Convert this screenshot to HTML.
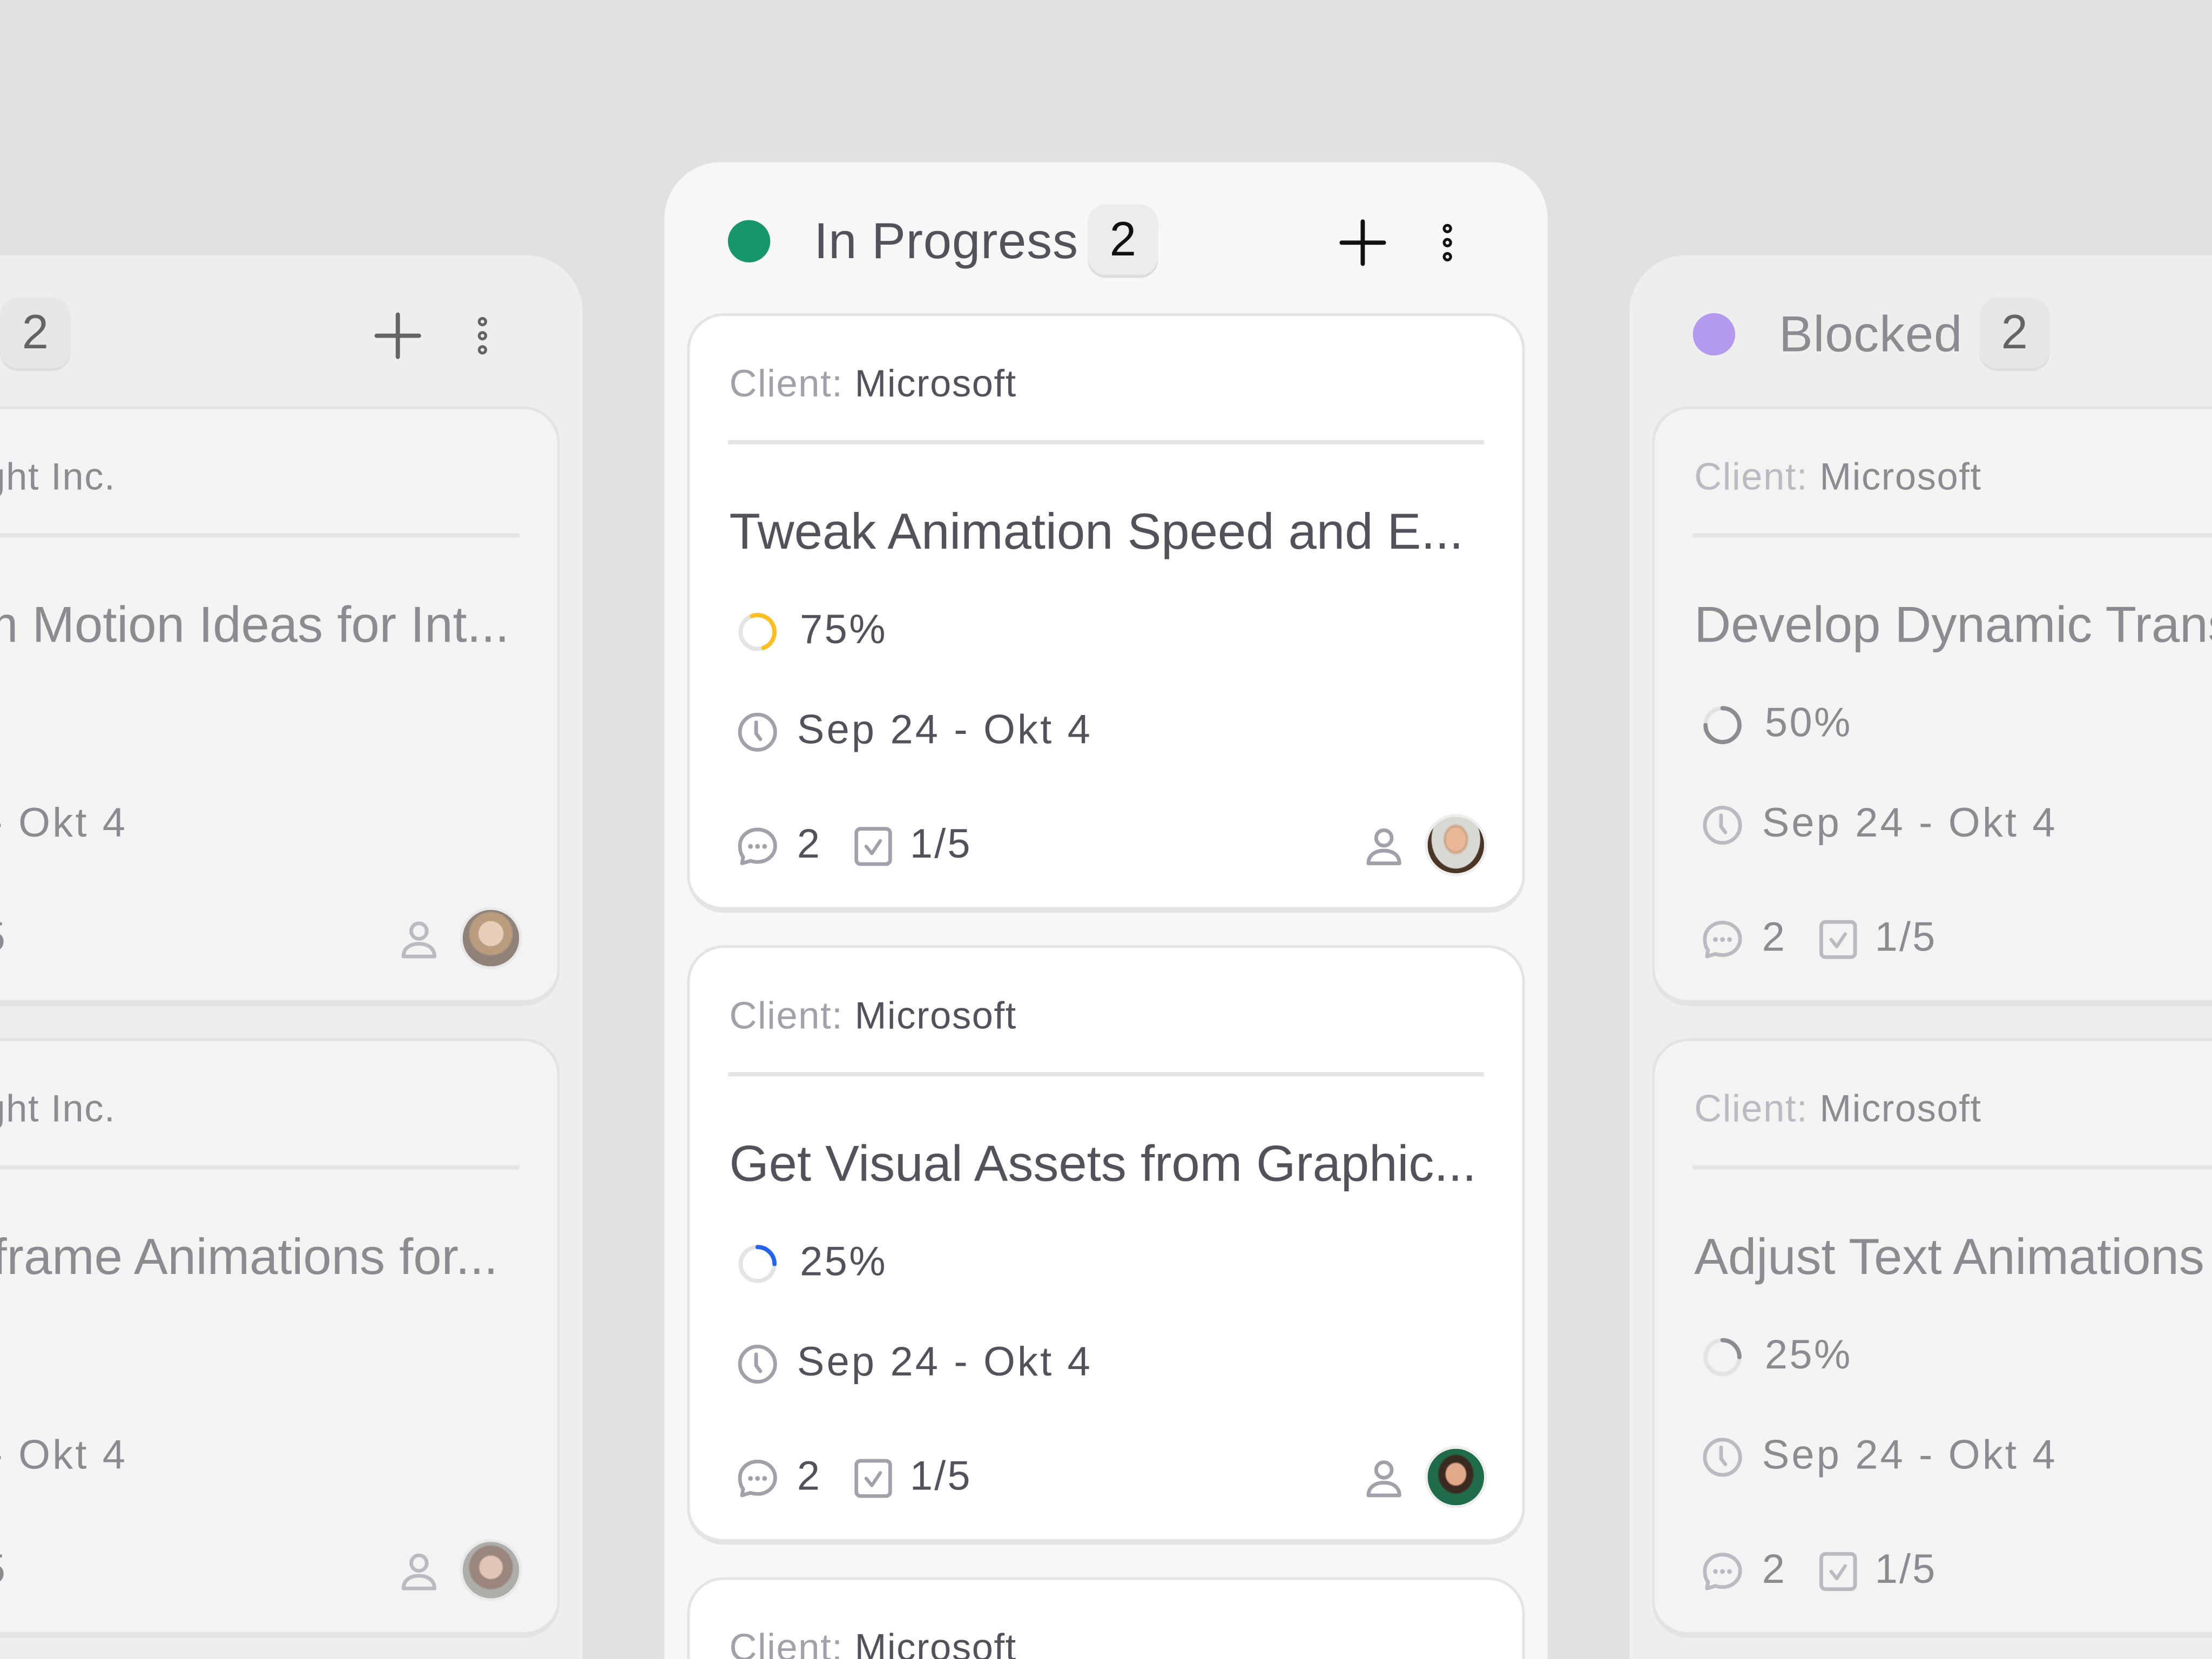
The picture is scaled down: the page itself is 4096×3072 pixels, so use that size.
<!DOCTYPE html>
<html><head><meta charset="utf-8"><style>
*{margin:0;padding:0;box-sizing:border-box}
html,body{width:4096px;height:3072px;overflow:hidden;background:#e1e1e1}
#s{position:absolute;left:0;top:0;width:1568px;height:1176px;transform:scale(2.6122449);transform-origin:0 0;font-family:"Liberation Sans",sans-serif;overflow:hidden}
.col{position:absolute;width:626px;background:#f7f7f7;border-radius:40px 40px 0 0;overflow:hidden}
.side{opacity:.6}
.dot{position:absolute;left:45px;width:30px;height:30px;border-radius:50%;top:41px}
.htitle{position:absolute;left:106px;top:34px;font-size:36px;line-height:44px;color:#52525b;white-space:nowrap;letter-spacing:.3px}
.badge{position:absolute;top:30px;width:50px;height:50px;border-radius:13px;background:#ececee;box-shadow:0 2px 0 #dcdcde;font-size:34px;line-height:50px;text-align:center;color:#111}
.plus{position:absolute;left:478px;top:40px}
.more{position:absolute;left:538px;top:40px}
.card{position:absolute;left:16px;width:594px;height:425px;background:#fff;border:2px solid #e4e4e7;border-bottom-width:4px;border-radius:26px;overflow:hidden}
.card>*{position:absolute;white-space:nowrap}
.cl{left:28px;top:32px;font-size:27px;line-height:32px;color:#a1a1aa;letter-spacing:.6px}
.cl b{font-weight:normal;color:#52525b}
.div{left:27px;top:88px;width:536px;height:3px;background:#e4e4e7}
.tt{left:28px;top:131px;font-size:36px;line-height:44px;color:#52525b}
.ttr{right:34px;top:131px;font-size:36px;line-height:44px;color:#52525b}
.pi{left:31px;top:207px}
.pt{left:78px;top:205px;font-size:29px;line-height:36px;color:#52525b;letter-spacing:1.3px}
.ci{left:31px;top:278px}
.dt{left:76px;top:276px;font-size:29px;line-height:36px;color:#52525b;letter-spacing:1.6px}
.mi{left:31px;top:359px}
.mt{left:76px;top:357px;font-size:29px;line-height:36px;color:#52525b}
.ki{left:113px;top:359px}
.kt{left:156px;top:357px;font-size:29px;line-height:36px;color:#52525b;letter-spacing:1.2px}
.ui{left:475px;top:359px}
.av{left:521px;top:353px;width:44px;height:44px;border-radius:50%;border:2px solid #eee;overflow:hidden}
</style></head><body><div id="s">

<svg width="0" height="0" style="position:absolute"><defs>
<symbol id="clock" viewBox="0 0 34 34"><circle cx="17" cy="17" r="12.5" fill="none" stroke="#a1a1aa" stroke-width="2.6"/><path d="M16 10v8l3 4" fill="none" stroke="#a1a1aa" stroke-width="2.6" stroke-linecap="round"/></symbol>
<symbol id="msg" viewBox="0 0 34 34"><path d="M17 5c7 0 12.5 5 12.5 11.5S24 28 17 28c-2 0-3.5-.3-5-.8L6 29l.8-4.6C5 22.5 4.5 19.5 4.5 16.5 4.5 10 10 5 17 5z" fill="none" stroke="#a1a1aa" stroke-width="2.6" stroke-linejoin="round"/><circle cx="12" cy="17" r="1.7" fill="#a1a1aa"/><circle cx="17" cy="17" r="1.7" fill="#a1a1aa"/><circle cx="22" cy="17" r="1.7" fill="#a1a1aa"/></symbol>
<symbol id="chk" viewBox="0 0 34 34"><rect x="5" y="4.5" width="24" height="25" rx="3" fill="none" stroke="#a1a1aa" stroke-width="2.6"/><path d="M12 17l4 5 6-9" fill="none" stroke="#a1a1aa" stroke-width="2.4" stroke-linecap="round" stroke-linejoin="round"/></symbol>
<symbol id="usr" viewBox="0 0 34 34"><circle cx="17" cy="11" r="5.5" fill="none" stroke="#a1a1aa" stroke-width="2.6"/><path d="M6 29c0-6 5-9 11-9s11 3 11 9z" fill="none" stroke="#a1a1aa" stroke-width="2.6" stroke-linejoin="round"/></symbol>
<symbol id="plus" viewBox="0 0 34 34"><path d="M17 2v30M2 17h30" stroke="#111" stroke-width="3" stroke-linecap="round"/></symbol>
<symbol id="more" viewBox="0 0 34 34"><circle cx="17" cy="7" r="2.3" fill="none" stroke="#111" stroke-width="2"/><circle cx="17" cy="17" r="2.3" fill="none" stroke="#111" stroke-width="2"/><circle cx="17" cy="27" r="2.3" fill="none" stroke="#111" stroke-width="2"/></symbol>
</defs></svg>

<!-- LEFT COLUMN -->
<div class="col side" style="left:-213px;top:181px;height:995px">
  <div class="dot" style="background:#3b82f6"></div>
  <div class="htitle">To Do</div>
  <div class="badge" style="left:213px">2</div>
  <svg class="plus" width="34" height="34"><use href="#plus"/></svg>
  <svg class="more" width="34" height="34"><use href="#more"/></svg>
  <div class="card" style="top:107px">
    <div class="cl" style="left:auto;right:313px">Client: <b>Brightlight Inc.</b></div>
    <div class="div"></div>
    <div class="ttr">Brainstorm Motion Ideas for Int...</div>
    <svg class="ci" width="34" height="34"><use href="#clock"/></svg><div class="dt">Sep 24 - Okt 4</div>
    <svg class="mi" width="34" height="34"><use href="#msg"/></svg><div class="mt">2</div>
    <svg class="ki" width="34" height="34"><use href="#chk"/></svg><div class="kt">1/5</div>
    <svg class="ui" width="34" height="34"><use href="#usr"/></svg>
    <div class="av" style="background:radial-gradient(circle at 50% 42%,#e9c1a0 0 28%,#a0703f 30% 48%,#5b4434 52%)"></div>
  </div>
  <div class="card" style="top:555px">
    <div class="cl" style="left:auto;right:313px">Client: <b>Brightlight Inc.</b></div>
    <div class="div"></div>
    <div class="ttr" style="right:42px">Create Keyframe Animations for...</div>
    <svg class="ci" width="34" height="34"><use href="#clock"/></svg><div class="dt">Sep 24 - Okt 4</div>
    <svg class="mi" width="34" height="34"><use href="#msg"/></svg><div class="mt">2</div>
    <svg class="ki" width="34" height="34"><use href="#chk"/></svg><div class="kt">1/5</div>
    <svg class="ui" width="34" height="34"><use href="#usr"/></svg>
    <div class="av" style="background:radial-gradient(circle at 50% 45%,#e2b49a 0 26%,#6b4a3a 30% 50%,#8a8a84 54%)"></div>
  </div>
</div>

<!-- CENTER COLUMN -->
<div class="col" style="left:471px;top:115px;height:1061px">
  <div class="dot" style="background:#17966a"></div>
  <div class="htitle">In Progress</div>
  <div class="badge" style="left:300px">2</div>
  <svg class="plus" width="34" height="34"><use href="#plus"/></svg>
  <svg class="more" width="34" height="34"><use href="#more"/></svg>
  <div class="card" style="top:107px">
    <div class="cl">Client: <b>Microsoft</b></div>
    <div class="div"></div>
    <div class="tt">Tweak Animation Speed and E...</div>
    <svg class="pi" width="34" height="34" viewBox="0 0 34 34"><circle cx="17" cy="17" r="12" fill="none" stroke="#e4e4e7" stroke-width="3"/><path d="M17 5A12 12 0 0 1 17 29" fill="none" stroke="#fbbf24" stroke-width="3" stroke-linecap="round" transform="rotate(-20 17 17)"/></svg>
    <div class="pt">75%</div>
    <svg class="ci" width="34" height="34"><use href="#clock"/></svg><div class="dt">Sep 24 - Okt 4</div>
    <svg class="mi" width="34" height="34"><use href="#msg"/></svg><div class="mt">2</div>
    <svg class="ki" width="34" height="34"><use href="#chk"/></svg><div class="kt">1/5</div>
    <svg class="ui" width="34" height="34"><use href="#usr"/></svg>
    <div class="av" style="background:radial-gradient(ellipse at 50% 40%,#e8b798 0 24%,#c9a07c 27%,#d8d8d4 33% 60%,#4a3526 62%)"></div>
  </div>
  <div class="card" style="top:555px">
    <div class="cl">Client: <b>Microsoft</b></div>
    <div class="div"></div>
    <div class="tt">Get Visual Assets from Graphic...</div>
    <svg class="pi" width="34" height="34" viewBox="0 0 34 34"><circle cx="17" cy="17" r="12" fill="none" stroke="#e4e4e7" stroke-width="3"/><path d="M17 5A12 12 0 0 1 29 17" fill="none" stroke="#2563eb" stroke-width="3" stroke-linecap="round"/></svg>
    <div class="pt">25%</div>
    <svg class="ci" width="34" height="34"><use href="#clock"/></svg><div class="dt">Sep 24 - Okt 4</div>
    <svg class="mi" width="34" height="34"><use href="#msg"/></svg><div class="mt">2</div>
    <svg class="ki" width="34" height="34"><use href="#chk"/></svg><div class="kt">1/5</div>
    <svg class="ui" width="34" height="34"><use href="#usr"/></svg>
    <div class="av" style="background:radial-gradient(ellipse at 50% 45%,#e2a88a 0 24%,#3b2a20 28% 42%,#1f6b4a 46%)"></div>
  </div>
  <div class="card" style="top:1003px">
    <div class="cl">Client: <b>Microsoft</b></div>
    <div class="div"></div>
  </div>
</div>

<!-- RIGHT COLUMN -->
<div class="col side" style="left:1155px;top:181px;height:995px;width:413px;border-radius:40px 0 0 0">
  <div class="dot" style="background:#8b5cf6;opacity:.9"></div>
  <div class="htitle">Blocked</div>
  <div class="badge" style="left:248px">2</div>
  <div class="card" style="top:107px">
    <div class="cl">Client: <b>Microsoft</b></div>
    <div class="div"></div>
    <div class="tt">Develop Dynamic Transitions</div>
    <svg class="pi" width="34" height="34" viewBox="0 0 34 34"><circle cx="17" cy="17" r="12" fill="none" stroke="#e4e4e7" stroke-width="3"/><path d="M17 5A12 12 0 1 1 5 17" fill="none" stroke="#52525b" stroke-width="3" stroke-linecap="round"/></svg>
    <div class="pt">50%</div>
    <svg class="ci" width="34" height="34"><use href="#clock"/></svg><div class="dt">Sep 24 - Okt 4</div>
    <svg class="mi" width="34" height="34"><use href="#msg"/></svg><div class="mt">2</div>
    <svg class="ki" width="34" height="34"><use href="#chk"/></svg><div class="kt">1/5</div>
  </div>
  <div class="card" style="top:555px">
    <div class="cl">Client: <b>Microsoft</b></div>
    <div class="div"></div>
    <div class="tt">Adjust Text Animations</div>
    <svg class="pi" width="34" height="34" viewBox="0 0 34 34"><circle cx="17" cy="17" r="12" fill="none" stroke="#e4e4e7" stroke-width="3"/><path d="M17 5A12 12 0 0 1 29 17" fill="none" stroke="#52525b" stroke-width="3" stroke-linecap="round"/></svg>
    <div class="pt">25%</div>
    <svg class="ci" width="34" height="34"><use href="#clock"/></svg><div class="dt">Sep 24 - Okt 4</div>
    <svg class="mi" width="34" height="34"><use href="#msg"/></svg><div class="mt">2</div>
    <svg class="ki" width="34" height="34"><use href="#chk"/></svg><div class="kt">1/5</div>
  </div>
</div>

</div></body></html>
